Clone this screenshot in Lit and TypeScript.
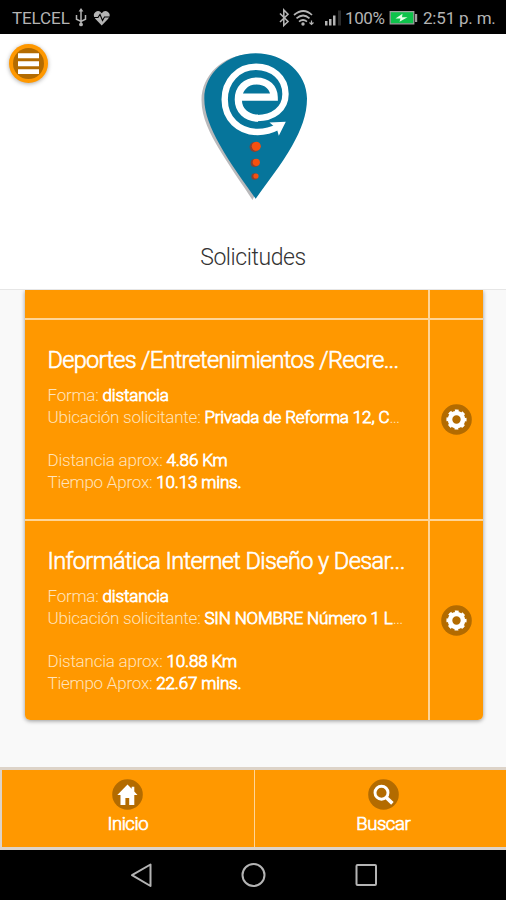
import { LitElement, html, css, svg } from "lit";
import { customElement, property } from "lit/decorators.js";

interface Request {
  title: string;
  form: string;
  place: string;
  distance: string;
  time: string;
  fit: string;
}

const requests: Request[] = [
  {
    title: "Deportes /Entretenimientos /Recre...",
    form: "distancia",
    place: "Privada de Reforma 12, C",
    distance: "4.86 Km",
    time: "10.13 mins.",
    fit: "first",
  },
  {
    title: "Informática Internet Diseño y Desar...",
    form: "distancia",
    place: "SIN NOMBRE Número 1 L",
    distance: "10.88 Km",
    time: "22.67 mins.",
    fit: "second",
  },
];

const glyphs = {
  gear: svg`<circle cx="15.5" cy="15.5" r="6.5" fill="none" stroke="#fff" stroke-width="4.6"/>
    <circle cx="15.5" cy="15.5" r="8.8" fill="none" stroke="#fff" stroke-width="2.6" stroke-dasharray="3.7 3.21" stroke-dashoffset="1.85"/>`,
  home: svg`<path fill="#fff" d="M15.5 5.500 5.300 15.900h3.200v10h4.900v-6.800h3.800v6.800h5.100v-10h3.200l-3.200-3.300V7.700h-2.600v2.100z"/>`,
  search: svg`<circle cx="13.5" cy="13.700" r="6.500" fill="none" stroke="#fff" stroke-width="2.900"/>
    <path d="m18 18.200 6.400 6.200" stroke="#fff" stroke-width="3.600"/>`,
};

@customElement("round-icon")
export class RoundIcon extends LitElement {
  @property() name: keyof typeof glyphs = "gear";
  static styles = css`
    :host { display: block; width: 31px; height: 31px; }
    svg { display: block; }
  `;
  render() {
    return html`<svg width="31" height="31" viewBox="0 0 31 31">
      <circle cx="15.500" cy="15.500" r="15.300" fill="#b36b00"/>${glyphs[this.name]}
    </svg>`;
  }
}

@customElement("status-bar")
export class StatusBar extends LitElement {
  static styles = css`
    :host {
      display: flex; align-items: center; height: 34px; box-sizing: border-box;
      padding: 2px 10px 0 12px; background: #000; color: #b4b4b4;
      font: 400 17px/20px Roboto, sans-serif; white-space: pre;
    }
    svg { display: block; flex: none; }
    .carrier { width: 63px; letter-spacing: -0.100px; }
    .gap { flex: 1; }
    .percent { width: 43px; letter-spacing: -0.400px; }
    .clock { width: 73px; letter-spacing: -0.200px; }
  `;
  render() {
    return html`
      <span class="carrier">TELCEL</span>
      <svg width="38" height="20" viewBox="0 0 38 20">
        <path d="M6 3v13M1.500 7v4.200L6 13.500l4.500-2.300V7" fill="none" stroke="#b4b4b4" stroke-width="1.500"/>
        <path d="m6 0 2.400 3.500H3.600z" fill="#b4b4b4"/>
        <circle cx="6" cy="16.400" r="1.900" fill="#b4b4b4"/>
        <path d="M26.700 17.500 20.500 11Q17 6.500 20.500 4q3.500-2.300 6.200 1.200Q29.500 1.700 33 4q3.500 2.500 0 7z" fill="#b4b4b4"/>
        <path d="M19 9.500h4l2-3 2.500 6 2-3.500h5" fill="none" stroke="#000" stroke-width="1.100"/>
      </svg>
      <span class="gap"></span>
      <svg width="67" height="20" viewBox="0 0 67 20">
        <path d="m2 5.500 8 8-4.200 4V2l4.200 4.200-8 7.800" fill="none" stroke="#b4b4b4" stroke-width="1.600"/>
        <path d="M16 7q9.500-8 18 0M18.500 10.300q6.700-5.600 13 0M21 13.600q4-3.200 8 0" fill="none" stroke="#b4b4b4" stroke-width="1.700"/>
        <circle cx="25" cy="16" r="1.700" fill="#b4b4b4"/>
        <path d="M33.500 12.500v4M31.500 14.500l2 2 2-2" stroke="#b4b4b4" fill="none" stroke-width="1.200"/>
        <path d="M47 13h2.500v4.500H47zM51 11h2.500v6.500H51zM55 7.500h2.500v10H55z" fill="#b4b4b4"/>
        <path d="M60 2.500h3v15h-3z" fill="#2c2c2c"/>
      </svg>
      <span class="percent">100%</span>
      <svg width="35" height="20" viewBox="0 0 35 20">
        <path d="M2.200 3.700h23.600v12.100H2.200z" fill="#0ec34b" stroke="#a0a0a0" stroke-width="1.200"/>
        <path d="M27 6h2.200v8H27z" fill="#a0a0a0"/>
        <path d="m14.500 5.800-7 4.600h5l-1 3.400 8-4.600h-5.500z" fill="#e6ffe9"/>
      </svg>
      <span class="clock">2:51 p. m.</span>
    `;
  }
}

@customElement("pin-logo")
export class PinLogo extends LitElement {
  static styles = css`
    :host { display: block; width: 110px; height: 150px; }
    svg { display: block; }
  `;
  render() {
    return html`<svg width="110" height="150" viewBox="200 52 110 150">
      <path d="M253 54C222 54 201.500 76 201.500 100c0 18 9 34 17 48 10 17 25 38 34 52L262 180z" fill="#b9b9bb"/>
      <path d="M255.700 53.200c-29 0-51.400 20.500-51.400 45.300 0 15 6.500 30 15 45.500 11 20 26 40 36.400 54.800C266 184 282 164 292 146c9-16 15-31 15-47.500 0-25-22.500-45.300-51.300-45.300z" fill="#06759b"/>
      <g fill="none" stroke="#fff">
        <path d="M240 97.200h34.200C274 88 267.500 81 256.500 81 246 81 238.300 88.500 238.300 99.500s8 18.600 19.700 18.600" stroke-width="7.200"/>
        <path d="M257 118.100c16 0 28.500-8.800 28.500-24.100C285.500 77.500 272 66.800 256 66.800 238 66.800 224.700 81 224.700 99.500c0 19 14 32.500 33 32.500 8 0 14-1.800 21-5.500" stroke-width="6.400"/>
      </g>
      <path d="m269.500 122.600 16.300-.9-7 14-2-7z" fill="#fff"/>
      <g fill="#8b4030"><circle cx="254.600" cy="147" r="5"/><circle cx="254.600" cy="163" r="4"/><circle cx="254.600" cy="176.500" r="3.200"/></g>
      <g fill="#f7500f"><circle cx="256.300" cy="146.300" r="4.500"/><circle cx="256.300" cy="162.300" r="3.600"/><circle cx="256" cy="176" r="2.600"/></g>
    </svg>`;
  }
}

@customElement("request-row")
export class RequestRow extends LitElement {
  @property({ attribute: false }) item!: Request;
  static styles = css`
    :host {
      display: grid; grid-template-columns: 403px 1.500px 1fr; height: 199px;
      border-top: 2px solid #ffd596; box-sizing: content-box; color: #fff;
      font: 300 17px/22px Roboto, sans-serif; white-space: nowrap;
    }
    .body { padding: 26px 0 0 22.500px; overflow: hidden; }
    .title { font-size: 23.500px; line-height: 28px; -webkit-text-stroke: 0.600px #fff; }
    .title.first { letter-spacing: -0.670px; }
    .title.second { letter-spacing: -0.570px; }
    .details { padding-top: 10px; }
    .pair { height: 22px; color: #ffe3bb; letter-spacing: -0.230px; }
    .value { color: #fff; -webkit-text-stroke: 0.800px #fff; letter-spacing: -0.140px; }
    .dots { letter-spacing: -0.800px; }
    .lower { padding-top: 21px; }
    .line { background: #ffd596; }
    .action { display: flex; justify-content: center; align-items: center; }
  `;
  render() {
    const r = this.item;
    return html`
      <div class="body">
        <div class="title ${r.fit}">${r.title}</div>
        <div class="details">
          <div class="pair">Forma: <span class="value">${r.form}</span></div>
          <div class="pair">Ubicación solicitante: <span class="value">${r.place}</span><span class="dots">...</span></div>
        </div>
        <div class="lower">
          <div class="pair">Distancia aprox: <span class="value">${r.distance}</span></div>
          <div class="pair">Tiempo Aprox: <span class="value">${r.time}</span></div>
        </div>
      </div>
      <div class="line"></div>
      <div class="action"><round-icon name="gear"></round-icon></div>
    `;
  }
}

@customElement("app-root")
export class AppRoot extends LitElement {
  static styles = css`
    :host {
      display: flex; flex-direction: column; width: 506px; height: 900px;
      overflow: hidden; background: #f9f9f9; font-family: Roboto, sans-serif;
    }
    .header {
      position: relative; height: 256px; flex: none; background: #fff;
      display: flex; flex-direction: column; align-items: center;
      box-sizing: border-box; padding-top: 18px; border-bottom: 1px solid #e6e6e6;
    }
    pin-logo { margin-left: 4px; }
    .menu { position: absolute; left: 8px; top: 9px; filter: drop-shadow(0 1px 2px #0005); }
    h1 { margin: 40px 0 0; font: 300 23px/32px Roboto, sans-serif; color: #333; letter-spacing: -0.420px; }
    .list { flex: none; height: 477px; padding: 0 23px 0 25px; overflow: hidden; }
    .card { background: #ff9800; border-radius: 0 0 5px 5px; height: 430px; overflow: hidden; }
    .shadow { border-radius: 0 0 5px 5px; box-shadow: 0 1px 4px #0006; }
    .previous { display: grid; grid-template-columns: 403px 1.500px 1fr; height: 28px; }
    .line { background: #ffd596; }
    .tabs {
      flex: none; height: 83px; box-sizing: border-box; background: #ff9800;
      display: grid; grid-template-columns: 251.500px 1fr;
      border: solid #ddd3c8; border-width: 3px 0 3px 2px;
    }
    .tab {
      display: flex; flex-direction: column; align-items: center; padding-top: 9px;
      color: #fff; font: 300 18.500px/24px Roboto, sans-serif; letter-spacing: -0.450px;
      -webkit-text-stroke: 0.700px #fff;
    }
    .tab + .tab { border-left: 1.500px solid #ffd596; padding-left: 6px; }
    .tab span { padding-top: 2px; }
    .keys { flex: none; height: 50px; background: #000; }
    .keys svg { display: block; }
  `;
  render() {
    return html`
      <status-bar></status-bar>
      <div class="header">
        <svg class="menu" width="41" height="41" viewBox="0 0 41 41">
          <circle cx="20.500" cy="20.500" r="19.500" fill="#ff9800"/>
          <circle cx="20.500" cy="20.500" r="15.500" fill="#b36b00"/>
          <path d="M10 10.300h21v5H10zM10 18.300h21v5H10zM10 26.300h21v4.700H10z" fill="#fff"/>
        </svg>
        <pin-logo></pin-logo>
        <h1>Solicitudes</h1>
      </div>
      <div class="list">
        <div class="shadow"><div class="card">
          <div class="previous"><span></span><span class="line"></span><span></span></div>
          ${requests.map((r) => html`<request-row .item=${r}></request-row>`)}
        </div></div>
      </div>
      <div class="tabs">
        <div class="tab"><round-icon name="home"></round-icon><span>Inicio</span></div>
        <div class="tab"><round-icon name="search"></round-icon><span>Buscar</span></div>
      </div>
      <div class="keys">
        <svg width="506" height="50" viewBox="0 0 506 50" fill="none" stroke="#b4b4b4" stroke-width="2">
          <path d="M150.500 14.500v21.500L132 25.200z" stroke-linejoin="round"/>
          <circle cx="253.500" cy="25" r="11"/>
          <rect x="356.500" y="15" width="19.500" height="20" rx="1"/>
        </svg>
      </div>
    `;
  }
}
